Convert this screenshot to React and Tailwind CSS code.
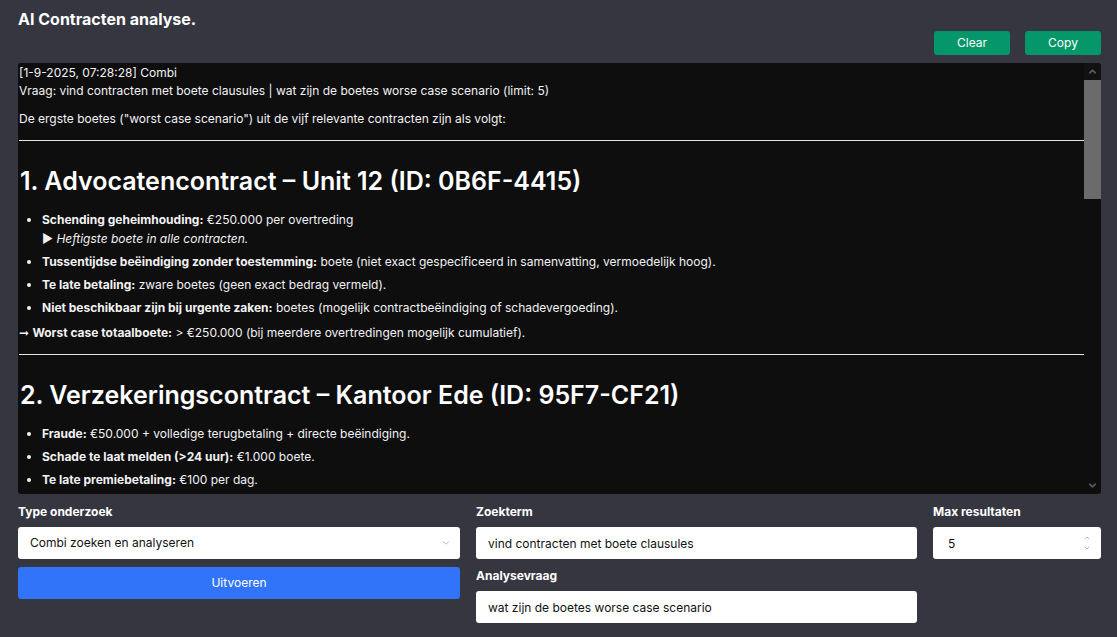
import React, { useState } from 'react';
import { ChevronDown, ChevronUp } from 'lucide-react';

const contracts = [
  {
    title: '1. Advocatencontract – Unit 12 (ID: 0B6F-4415)',
    items: [
      { label: 'Schending geheimhouding:', text: ' €250.000 per overtreding', note: 'Heftigste boete in alle contracten.' },
      { label: 'Tussentijdse beëindiging zonder toestemming:', text: ' boete (niet exact gespecificeerd in samenvatting, vermoedelijk hoog).' },
      { label: 'Te late betaling:', text: ' zware boetes (geen exact bedrag vermeld).' },
      { label: 'Niet beschikbaar zijn bij urgente zaken:', text: ' boetes (mogelijk contractbeëindiging of schadevergoeding).' },
    ],
    total: ' > €250.000 (bij meerdere overtredingen mogelijk cumulatief).',
  },
  {
    title: '2. Verzekeringscontract – Kantoor Ede (ID: 95F7-CF21)',
    items: [
      { label: 'Fraude:', text: ' €50.000 + volledige terugbetaling + directe beëindiging.' },
      { label: 'Schade te laat melden (>24 uur):', text: ' €1.000 boete.' },
      { label: 'Te late premiebetaling:', text: ' €100 per dag.' },
      { label: 'Onjuiste informatie bij aanvraag:', text: ' dekking vervalt, terugvordering van uitkeringen.' },
    ],
    total: ' > €50.000 (plus terugbetaling van alle uitkeringen).',
  },
  {
    title: '3. Huurcontract – Bedrijfsruimte Utrecht (ID: 7A2C-11D9)',
    items: [
      { label: 'Onderverhuur zonder toestemming:', text: ' €25.000 boete.' },
      { label: 'Te late huurbetaling:', text: ' €250 per dag.' },
      { label: 'Schade aan pand:', text: ' volledige herstelkosten.' },
    ],
    total: ' > €25.000.',
  },
  {
    title: '4. Leveringscontract – Magazijn Zwolle (ID: 3C81-A07E)',
    items: [
      { label: 'Te late levering:', text: ' €500 per dag vertraging.' },
      { label: 'Kwaliteitsgebreken:', text: ' vervanging op kosten leverancier + €5.000 boete.' },
      { label: 'Exclusiviteit geschonden:', text: ' €20.000 boete.' },
    ],
    total: ' > €20.000.',
  },
  {
    title: '5. Onderhoudscontract – Unit 7 (ID: D4E2-9B10)',
    items: [
      { label: 'Niet nakomen responstijd:', text: ' €250 per incident.' },
      { label: 'Onderhoud niet uitgevoerd:', text: ' €2.500 boete per gemiste beurt.' },
    ],
    total: ' > €5.000.',
  },
];

const App = () => {
  const [type, setType] = useState('combi');
  const [term, setTerm] = useState('vind contracten met boete clausules');
  const [question, setQuestion] = useState('wat zijn de boetes worse case scenario');
  const [limit, setLimit] = useState(5);

  return (
    <div className="min-h-screen bg-[#363641] pl-[18px] pr-[16px] pt-[9px] pb-[14px] font-['Inter',sans-serif] text-white">
      <h1 className="text-[16px] font-bold leading-[20px]">AI Contracten analyse.</h1>

      <div className="mt-[2px] flex justify-end gap-[15px]">
        <button className="h-[24px] w-[76px] rounded-[3px] bg-[#059669] text-[12px] text-white">Clear</button>
        <button className="h-[24px] w-[76px] rounded-[3px] bg-[#059669] text-[12px] text-white">Copy</button>
      </div>

      {/* output panel */}
      <div className="mt-[8px] flex h-[431px] overflow-hidden rounded-[3px] bg-[#0e0e0f]">
        <div className="flex-1 overflow-y-auto pl-[1px] text-[12px] leading-[18px] text-[#f2f2f2] [scrollbar-width:none]">
          <div className="pt-[1px]">[1-9-2025, 07:28:28] Combi</div>
          <div>Vraag: vind contracten met boete clausules | wat zijn de boetes worse case scenario (limit: 5)</div>
          <p className="mt-[10px]">De ergste boetes ("worst case scenario") uit de vijf relevante contracten zijn als volgt:</p>

          {contracts.map((c) => (
            <div key={c.title}>
              <hr className="mt-[12px] border-t border-[#e5e5e5]" />
              <h2 className="mt-[24px] pl-[1px] text-[25px] font-semibold leading-[32px] text-white">{c.title}</h2>
              <ul className="mt-[13px] list-disc pl-[23px]">
                {c.items.map((it) => (
                  <li key={it.label} className="mb-[4px] leading-[19px]">
                    <strong className="font-bold">{it.label}</strong>
                    {it.text}
                    {it.note && (
                      <div>
                        ▶ <em className="italic">{it.note}</em>
                      </div>
                    )}
                  </li>
                ))}
              </ul>
              <p className="mt-[7px]">
                ➞ <strong className="font-bold">Worst case totaalboete:</strong>
                {c.total}
              </p>
            </div>
          ))}
          <hr className="mt-[13px] border-t border-[#e5e5e5]" />
          <p className="mt-[14px]">
            <strong className="font-bold">Conclusie:</strong> het advocatencontract van Unit 12 bevat de hoogste boete (€250.000 per overtreding).
          </p>
          <div className="h-[16px]" />
        </div>

        {/* scrollbar */}
        <div className="flex w-[17px] flex-col">
          <div className="flex h-[17px] items-center justify-center bg-[#121214]">
            <ChevronUp className="h-[11px] w-[11px] text-[#58585e]" strokeWidth={3.5} />
          </div>
          <div className="flex-1">
            <div className="h-[119px] bg-[#6b6b6b]" />
          </div>
          <div className="flex h-[17px] items-center justify-center">
            <ChevronDown className="h-[11px] w-[11px] text-[#58585e]" strokeWidth={3.5} />
          </div>
        </div>
      </div>

      {/* form */}
      <div className="mt-[10px] grid grid-cols-[442px_441px_1fr] gap-x-[16px]">
        <div className="flex flex-col">
          <label className="text-[12px] font-bold leading-[16px]">Type onderzoek</label>
          <div className="relative mt-[7px]">
            <select
              value={type}
              onChange={(e) => setType(e.target.value)}
              className="h-[32px] w-full appearance-none rounded-[3px] bg-white pl-[12px] text-[12px] text-[#111] outline-none"
            >
              <option value="combi">Combi zoeken en analyseren</option>
              <option value="zoeken">Alleen zoeken</option>
              <option value="analyse">Alleen analyseren</option>
            </select>
            <ChevronDown className="pointer-events-none absolute right-[9px] top-[11px] h-[10px] w-[10px] text-[#aaa]" strokeWidth={2} />
          </div>
          <button className="mt-[8px] h-[32px] w-full rounded-[3px] bg-[#3174f9] text-[12px] text-white">Uitvoeren</button>
        </div>

        <div className="flex flex-col">
          <label className="text-[12px] font-bold leading-[16px]">Zoekterm</label>
          <input
            value={term}
            onChange={(e) => setTerm(e.target.value)}
            className="mt-[7px] h-[32px] w-full rounded-[3px] bg-white px-[12px] text-[12px] text-[#111] outline-none"
          />
          <label className="mt-[9px] text-[12px] font-bold leading-[16px]">Analysevraag</label>
          <input
            value={question}
            onChange={(e) => setQuestion(e.target.value)}
            className="mt-[7px] h-[32px] w-full rounded-[3px] bg-white px-[12px] text-[12px] text-[#111] outline-none"
          />
        </div>

        <div className="flex flex-col">
          <label className="text-[12px] font-bold leading-[16px]">Max resultaten</label>
          <div className="relative mt-[7px]">
            <input
              type="number"
              min={1}
              value={limit}
              onChange={(e) => setLimit(e.target.value)}
              className="h-[32px] w-full rounded-[3px] bg-white pl-[15px] pr-[20px] text-[12px] text-[#111] outline-none [appearance:textfield] [&::-webkit-inner-spin-button]:appearance-none [&::-webkit-outer-spin-button]:appearance-none"
            />
            <div className="pointer-events-none absolute right-[10px] top-[7px] flex flex-col items-center text-[#999]">
              <ChevronUp className="h-[8px] w-[8px]" strokeWidth={2} />
              <ChevronDown className="mt-[2px] h-[8px] w-[8px]" strokeWidth={2} />
            </div>
          </div>
        </div>
      </div>
    </div>
  );
};

export default App;
